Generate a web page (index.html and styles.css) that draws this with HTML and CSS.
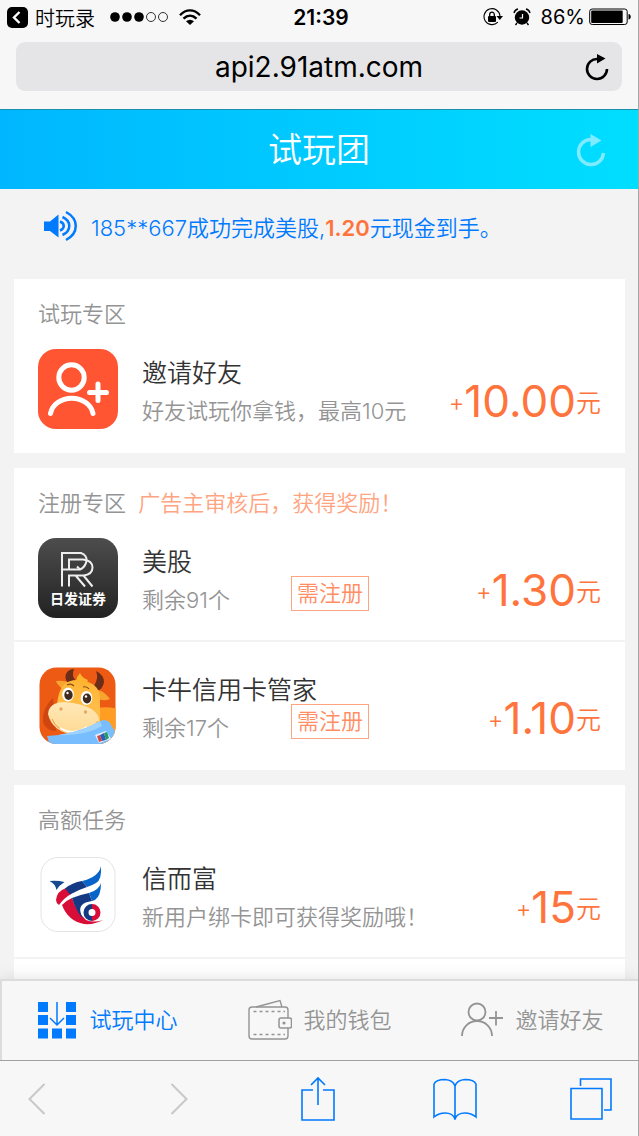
FILE: index.html
```html
<!DOCTYPE html>
<html lang="zh-CN">
<head>
<meta charset="utf-8">
<meta name="viewport" content="width=device-width, initial-scale=1">
<title>试玩团</title>
<link rel="stylesheet" href="styles.css">
</head>
<body>
<div class="browser-top">
  <div class="status">
    <div class="status-left">
      <svg width="21" height="21" viewBox="0 0 21 21"><rect width="21" height="21" rx="5"/><path d="M12.500 5 7 10.500l5.500 5.500" fill="none" stroke="#fff" stroke-width="2.400"/></svg>
      <span class="back-app">时玩录</span>
      <svg class="signal" width="58" height="12" viewBox="0 0 58 12"><circle cx="5" cy="6" r="4.800"/><circle cx="17" cy="6" r="4.800"/><circle cx="29" cy="6" r="4.800"/><g fill="none" stroke="#000" stroke-width=".8"><circle cx="41" cy="6" r="4.500"/><circle cx="53" cy="6" r="4.500"/></g></svg>
      <svg width="22" height="17" viewBox="0 0 22 17"><g fill="none" stroke="#000" stroke-width="2.400"><path d="M1 6.200C7-.2 15-.2 21 6.200M4.500 9.700c4-4 9-4 13 0"/></g><path d="M7 12.300c2.500-2 5.500-2 8 0L11 16z"/></svg>
    </div>
    <span class="time">21:39</span>
    <div class="status-right">
      <svg width="20" height="18" viewBox="0 0 20 18"><path d="M14.800 14.200A8 8 0 1 1 17 8" fill="none" stroke="#000" stroke-width="1.100"/><path d="M13.500 8h6.500l-3.200 4z"/><rect x="5" y="8" width="8" height="6" rx="1"/><path d="M6.700 8V6.500a2.300 2.300 0 0 1 4.600 0V8" fill="none" stroke="#000" stroke-width="1.300"/></svg>
      <svg width="18" height="18" viewBox="0 0 18 18"><circle cx="9" cy="9.500" r="7.200"/><path d="M9.500 6v4H6.500" fill="none" stroke="#f7f7f7" stroke-width="1.200"/><path d="M1 5C1.500 3 3 1.500 5 1M17 5c-.5-2-2-3.500-4-4M4 15l-1.500 2M14 15l1.500 2" fill="none" stroke="#000" stroke-width="1.400"/></svg>
      <span class="percent">86%</span>
      <svg width="42" height="18" viewBox="0 0 42 18"><rect x=".7" y="1" width="37.500" height="15.500" rx="2.500" fill="none" stroke="#000" stroke-width="1"/><rect x="2.200" y="2.500" width="31.500" height="12.500" rx="1"/><path d="M39.500 6c3 .5 3 5 0 5.500z"/></svg>
    </div>
  </div>
  <div class="address">
    <span class="url">api2.91atm.com</span>
    <button class="reload" type="button" aria-label="刷新"><svg width="24" height="28" viewBox="0 0 24 28"><path d="M12.500 6A10 10 0 1 0 22 16" fill="none" stroke="#000" stroke-width="2.600"/><path d="M12 1v9.500l8.500-5z"/></svg></button>
  </div>
</div>

<header class="header">
  <h1>试玩团</h1>
  <button class="refresh" type="button" aria-label="刷新"><svg width="30" height="34" viewBox="0 0 30 34"><path d="M15 6.500A12.500 12.500 0 1 0 27.500 20" fill="none" stroke="#80ebff" stroke-width="3.400"/><path d="M14.500 1v13l11-6.500z" fill="#80ebff"/></svg></button>
</header>

<main class="content">
  <p class="notice">
    <svg width="36" height="34" viewBox="0 0 36 34"><path d="M1 12.500h6L15.500 5.500v23L7 22H1z" fill="#007aff"/><g fill="none" stroke="#007aff" stroke-width="2.500"><path d="M17 12.500c5 2 5 7 0 9"/><path d="M19.500 8c9 4 9 14 0 18"/><path d="M23 3c13 7 13 21 0 28"/></g></svg>
    <span>185**667成功完成美股,<strong>1.20</strong>元现金到手。</span>
  </p>

  <section class="card">
    <h2 class="card-title">试玩专区</h2>
    <article class="row">
      <svg class="app-icon" viewBox="0 0 80 80"><rect width="80" height="80" rx="18" fill="#ff5533"/><g fill="none" stroke="#fff" stroke-width="5" stroke-linecap="round"><circle cx="33.500" cy="28.500" r="12.700"/><path d="M12.500 64.500a21.500 18 0 0 1 42.500 0M51.500 43.500h17M60 35v16.500"/></g></svg>
      <div class="info"><h3>邀请好友</h3><p class="desc wide">好友试玩你拿钱，最高10元</p></div>
      <p class="reward"><i>+</i><b>10.00</b><span>元</span></p>
    </article>
  </section>

  <section class="card">
    <h2 class="card-title">注册专区 <em>广告主审核后，获得奖励！</em></h2>
    <article class="row">
      <svg class="app-icon" viewBox="0 0 80 80"><defs><linearGradient id="dark" x2="0" y2="1"><stop stop-color="#4d4d4d"/><stop offset="1" stop-color="#222"/></linearGradient></defs><rect width="80" height="80" rx="18" fill="url(#dark)"/><g fill="none" stroke="#eee" stroke-width="2"><path d="M24 48.500V15h19q6 2 5.500 8-1 6-6.500 8.500H24"/><path d="M31 31V21.500h14q9.500 1 9.500 8t-9 8H31v11M38 38l9 10.500M45.500 37.500l9 11M42 31.500l-3-3"/></g><text class="logo-text" x="40" y="66" text-anchor="middle">日发证券</text></svg>
      <div class="info"><h3>美股</h3><p class="desc">剩余91个</p><span class="tag">需注册</span></div>
      <p class="reward"><i>+</i><b>1.30</b><span>元</span></p>
    </article>
    <article class="row">
      <svg class="app-icon" viewBox="0 0 80 80"><defs><clipPath id="ox"><rect x="1.500" y="1.500" width="76" height="76.500" rx="17"/></clipPath><linearGradient id="face" x2="0" y2="1"><stop stop-color="#ffb535"/><stop offset="1" stop-color="#ffc45a"/></linearGradient><linearGradient id="snout" x2="0" y2="1"><stop stop-color="#ffe8b8"/><stop offset="1" stop-color="#ffd992"/></linearGradient></defs>
        <g clip-path="url(#ox)"><rect width="80" height="80" fill="#ec5a14"/><path d="M58 42q12-2 22 1v37H50z" fill="#ff9e22"/><path d="M15 32Q4 42 5 56q3 9 13 9z" fill="#cf4610"/>
        <path d="M30 18q-5-8 0-13 3-2 6-2-3 7 2 12zM56 20q5-8 2-15 8 4 8 11-1 7-7 9z" fill="#6b2c18"/>
        <path d="M26 24q-7-5-8-9 8-1 14 2zM60 24q6 1 12 9-7 3-13-1z" fill="#f8a530"/>
        <path d="M20 32q3-18 19-18 23 1 23 19v28l-20 9-27-12z" fill="url(#face)"/><path d="M38 15q1-5 4-8 2 5 8 7l-3 6z" fill="#ffb42e"/>
        <path d="M10 48q1-12 17-12 31 3 34 17 0 17-24 16Q14 66 10 48" fill="url(#snout)"/><path d="M14 53q4 12 23 14 16 0 23-12" fill="none" stroke="#d98a35" stroke-width=".8"/><path d="M22 62q13 8 27-1" fill="none" stroke="#fff" stroke-width="1.500"/>
        <ellipse cx="30" cy="28.500" rx="5.800" ry="7" fill="#fff"/><ellipse cx="48.500" cy="32" rx="5.800" ry="7" fill="#fff"/><ellipse cx="30.500" cy="29" rx="4.200" ry="5" fill="#3f2a20"/><ellipse cx="49" cy="32.500" rx="4.200" ry="5" fill="#3f2a20"/><circle cx="29.500" cy="27" r="1.200" fill="#fff"/><circle cx="48" cy="30.500" r="1.200" fill="#fff"/>
        <path d="M29 19q4-2 7 1M45 21q4-1 6 2" fill="none" stroke="#8c4b13" stroke-width="1.200"/><circle cx="23" cy="43" r="1.700" fill="#e9a85c"/><circle cx="47.500" cy="46" r="1.700" fill="#e9a85c"/>
        <path d="M9 70q28-1 56-16 6 0 8 5l7 11v10H12z" fill="#78beff"/><path d="M20 69q20 1 36-5l8-4-2-5q-18 11-42 14z" fill="#9bd2ff"/><path d="m57 69 11-4 5 8-12 4z" fill="#e8f4ff"/><path d="m59 70 3-1 2 6-3 1z" fill="#d6463d"/><path d="m62 69 4-2 2 7-4 1z" fill="#315bba"/><path d="m66 67 3-1 2 6-3 2z" fill="#239b63"/></g></svg>
      <div class="info"><h3>卡牛信用卡管家</h3><p class="desc">剩余17个</p><span class="tag">需注册</span></div>
      <p class="reward"><i>+</i><b>1.10</b><span>元</span></p>
    </article>
  </section>

  <section class="card">
    <h2 class="card-title">高额任务</h2>
    <article class="row">
      <svg class="app-icon" viewBox="0 0 80 80"><rect x="3" y="2.500" width="74" height="74" rx="17" fill="#fff" stroke="#e4e4e4"/>
        <g fill="#d80d38"><path d="M18 45q1-9 10-12l5 6q-7 4-12 11-3-2-3-5"/><path d="M24 50q5-5 10-7 4 13 14 22 8 3 17 0-9 5-19 4-16-3-22-19"/></g>
        <g fill="#153982"><path d="M27 33.500q7-6 17-7.500l5 6q-9 3-17 7.500z"/><path d="M34 43q7-3 17-5l3 8q-15 2-11 13l2 5q-7-8-11-21"/></g>
        <g fill="#0864c9"><path d="M44 26q17-4 19-15 1 14-5 17-3 2-9 4z"/><path d="M51 38q10-3 12-10 0 13-6 17l-3 1z"/></g>
        <path d="M11.500 26q7-1 15 1-5 3-8 8-1-6-7-9" fill="#174a91"/><path d="M54 51.500a6 6 0 0 0 0 12" fill="none" stroke="#153982" stroke-width="5"/><path d="M54 51.500a6 6 0 0 1 0 12" fill="none" stroke="#d80d38" stroke-width="5"/><path d="m54 54 3 3.300-3 3.400-3-3.400z" fill="#fff"/></svg>
      <div class="info"><h3>信而富</h3><p class="desc wide">新用户绑卡即可获得奖励哦！</p></div>
      <p class="reward"><i>+</i><b>15</b><span>元</span></p>
    </article>
    <article class="row"></article>
  </section>
</main>

<nav class="tabs">
  <a class="tab active" href="#center"><svg width="40" height="40" viewBox="0 0 40 40"><path d="M0 2h10v10H0zM28 2h10v10H28zM0 15h10v10H0zM28 15h10v10H28zM0 28.500h10v10H0zM14 28.500h10v10H14zM28 28.500h10v10H28z" fill="#007aff"/><path d="M19 2v22M12 18l7 7 7-7" fill="none" stroke="#007aff" stroke-width="1.500"/></svg>试玩中心</a>
  <a class="tab" href="#wallet"><svg width="44" height="42" viewBox="0 0 44 42"><g fill="none" stroke="#949494" stroke-width="1.400"><path d="M40 19V11q0-3-3-3H4Q1 8 1 11v26q0 3 3 3h33q3 0 3-3v-8"/><path d="M8 8 32 1.500l2 6.500"/><path d="M5.500 12.500H37M5.500 35.500H37" stroke-dasharray="3 3"/></g><rect x="31" y="19" width="12.500" height="10" rx="2" fill="#f7f7f7" stroke="#949494" stroke-width="1.500"/><circle cx="36" cy="24" r="1.600" fill="#949494"/></svg>我的钱包</a>
  <a class="tab" href="#invite"><svg width="44" height="40" viewBox="0 0 44 40"><g fill="none" stroke="#949494" stroke-width="1.800"><circle cx="17" cy="12" r="8.500"/><path d="M2 36a15 15 0 0 1 30 0M29 18h14M36 11v14.500"/></g></svg>邀请好友</a>
</nav>

<div class="toolbar">
  <button type="button" aria-label="后退" disabled><svg width="18" height="32" viewBox="0 0 18 32"><path d="M16.500 1 1.500 16l15 15" fill="none" stroke="#c8c8c8" stroke-width="2"/></svg></button>
  <button type="button" aria-label="前进" disabled><svg width="18" height="32" viewBox="0 0 18 32"><path d="m1.500 1 15 15-15 15" fill="none" stroke="#c8c8c8" stroke-width="2"/></svg></button>
  <button type="button" aria-label="分享"><svg width="34" height="46" viewBox="0 0 34 46"><path d="M12 14H1v30h32V14H22M17 29V2M10 9l7-7 7 7" fill="none" stroke="#007aff" stroke-width="1.600"/></svg></button>
  <button type="button" aria-label="书签"><svg width="44" height="42" viewBox="0 0 44 42"><path d="M22 8Q20 2 12 1.500 3 1.500 1 6v33Q6 35 12 35q8 0 10 6 2-6 10-6 6 0 11 4V6q-2-4.500-11-4.500Q24 2 22 8v33" fill="none" stroke="#007aff" stroke-width="1.600"/></svg></button>
  <button type="button" aria-label="标签页"><svg width="42" height="42" viewBox="0 0 42 42"><path d="M1 10.500h31V41H1zM10.500 8V1H41v31h-7" fill="none" stroke="#007aff" stroke-width="1.600"/></svg></button>
</div>
</body>
</html>
```
FILE: styles.css
```css
* { box-sizing: border-box; }
body {
  margin: 0;
  height: 100vh;
  display: flex;
  flex-direction: column;
  overflow: hidden;
  border-right: 1px solid #a6a6a6;
  background: #f3f3f3;
  color: #333;
  font-family: Inter, "Noto Sans CJK SC", sans-serif;
  font-size: 22px;
  font-weight: 350;
}
h1, h2, h3, p { margin: 0; font-weight: inherit; }
button { padding: 0; border: 0; background: none; display: flex; align-items: center; }
svg { display: block; flex: none; }

.browser-top { background: #f7f7f7; border-bottom: 1px solid #1c8fae; padding: 0 16px 18px; }
.status {
  display: grid;
  grid-template-columns: 1fr auto 1fr;
  align-items: center;
  height: 34px;
  margin: 0 -9px 8px;
  color: #000;
}
.status-left, .status-right { display: flex; align-items: center; }
.status-left { gap: 7px; }
.status-right { justify-content: flex-end; gap: 10px; }
.signal { margin: 0 4px 0 8px; }
.back-app { font-size: 20px; }
.time { font-size: 21px; font-weight: 600; padding-left: 4px; }
.percent { font-size: 20px; font-weight: 400; margin-right: -6px; }
.address {
  position: relative;
  display: flex;
  align-items: center;
  justify-content: center;
  height: 49px;
  border-radius: 9px;
  background: #e5e5e7;
}
.url { font-size: 28px; line-height: 48px; font-weight: 400; color: #000; }
.reload { position: absolute; right: 13px; }

.header {
  position: relative;
  display: flex;
  flex: none;
  align-items: center;
  justify-content: center;
  height: 79px;
  background: linear-gradient(90deg, #00b7ff, #00deff);
  color: #fff;
}
.header h1 { font-size: 34px; line-height: 78px; }
.refresh { position: absolute; right: 32px; }

.content { flex: 1; min-height: 0; overflow: hidden; padding: 0 13px 0 14px; }
.notice {
  display: flex;
  align-items: center;
  gap: 12px;
  height: 90px;
  padding: 0 29px 16px;
  color: #007aff;
}
.notice strong { font-weight: 600; color: #ff733c; }

.card { background: #fff; padding-top: 19px; margin-bottom: 15px; }
.card-title { padding: 0 24px; font-size: 22px; line-height: 32px; color: #949494; }
.card-title em { margin-left: 6px; font-style: normal; color: #ffa481; }
.row {
  display: flex;
  gap: 24px;
  padding: 19px 24px 22px;
  border-bottom: 2px solid #f3f3f3;
}
.row:last-child { border-color: transparent; }
.row + .row { padding-top: 24px; }
.app-icon { width: 80px; height: 80px; }
.logo-text { font: 700 14px "Noto Sans CJK SC", sans-serif; fill: #fff; }
.info {
  flex: 1;
  display: grid;
  grid-template-columns: 149px 1fr;
  grid-template-rows: 28px 42px;
  padding-top: 10px;
  height: 80px;
  white-space: nowrap;
}
.info h3 { grid-column: 1 / -1; font-size: 25px; line-height: 28px; }
.desc { line-height: 48px; color: #949494; }
.desc.wide { grid-column: 1 / -1; }
.tag {
  justify-self: start;
  align-self: start;
  padding: 0 5px;
  border: 1px solid #ffa481;
  line-height: 33px;
  color: #ff8e63;
}
.reward {
  display: flex;
  align-items: center;
  height: 80px;
  padding-top: 24px;
  color: #ff733c;
  line-height: 56px;
  white-space: nowrap;
}
.reward i { font-size: 24px; font-style: normal; padding-top: 4px; }
.reward b { font-size: 44px; font-weight: 400; }
.reward span { font-size: 25px; padding-top: 4px; }

.tabs {
  position: relative;
  display: flex;
  flex: none;
  height: 81px;
  padding-bottom: 2px;
  border-top: 2px solid #dcdcdc;
  border-left: 2px solid #dcdcdc;
  background: #f7f7f7;
  box-shadow: 0 0 16px rgba(0, 0, 0, .12);
}
.tab {
  flex: 1;
  display: flex;
  align-items: center;
  justify-content: center;
  gap: 11px;
  color: #949494;
  line-height: 28px;
  text-decoration: none;
}
.tab.active { color: #007aff; }

.toolbar {
  position: relative;
  display: grid;
  flex: none;
  grid-template-columns: 109fr 141fr 138fr 136fr 115fr;
  height: 76px;
  border-top: 1px solid #a0a0a0;
  background: #f7f7f7;
}
.toolbar button { justify-content: center; }
.toolbar button:first-child { justify-content: flex-start; padding-left: 28px; }
.toolbar button:last-child { justify-content: flex-end; padding-right: 26px; }
```
